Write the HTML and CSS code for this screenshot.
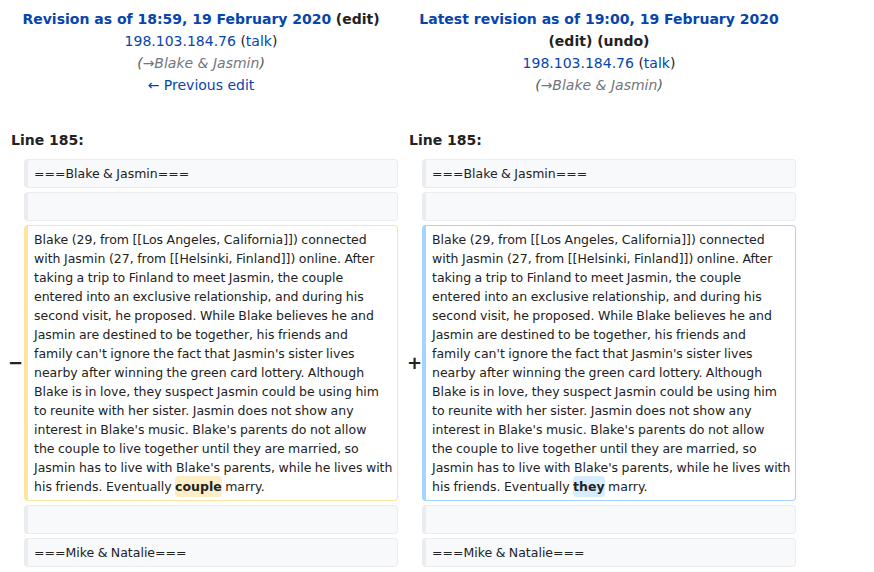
FILE: index.html
```html
<!DOCTYPE html>
<html lang="en">
<head>
<meta charset="utf-8">
<title>Difference between revisions</title>
<link rel="stylesheet" href="styles.css">
</head>
<body>
<div class="diff">
  <div class="title">
    <div><a class="strong" href="#">Revision as of 18:59, 19 February 2020</a> <span class="strong">(edit)</span></div>
    <div><a href="#">198.103.184.76</a> (<a href="#">talk</a>)</div>
    <div class="comment">(<span class="auto">→Blake &amp; Jasmin</span>)</div>
    <div><a href="#">← Previous edit</a></div>
  </div>
  <div class="title">
    <div><a class="strong" href="#">Latest revision as of 19:00, 19 February 2020</a> <span class="strong">(edit) (undo)</span></div>
    <div><a href="#">198.103.184.76</a> (<a href="#">talk</a>)</div>
    <div class="comment">(<span class="auto">→Blake &amp; Jasmin</span>)</div>
  </div>

  <div class="lineno">Line 185:</div>
  <div class="lineno">Line 185:</div>

  <div class="marker"></div>
  <div class="line context">===Blake &amp; Jasmin===</div>
  <div class="marker"></div>
  <div class="line context">===Blake &amp; Jasmin===</div>

  <div class="marker"></div>
  <div class="line context">&nbsp;</div>
  <div class="marker"></div>
  <div class="line context">&nbsp;</div>

  <div class="marker minus"><span>−</span></div>
  <div class="line deleted">Blake (29, from [[Los Angeles, California]]) connected<br>with Jasmin (27, from [[Helsinki, Finland]]) online. After<br>taking a trip to Finland to meet Jasmin, the couple<br>entered into an exclusive relationship, and during his<br>second visit, he proposed. While Blake believes he and<br>Jasmin are destined to be together, his friends and<br>family can't ignore the fact that Jasmin's sister lives<br>nearby after winning the green card lottery. Although<br>Blake is in love, they suspect Jasmin could be using him<br>to reunite with her sister. Jasmin does not show any<br>interest in Blake's music. Blake's parents do not allow<br>the couple to live together until they are married, so<br>Jasmin has to live with Blake's parents, while he lives with<br>his friends. Eventually <span class="change">couple</span> marry.</div>
  <div class="marker plus"><span>+</span></div>
  <div class="line added">Blake (29, from [[Los Angeles, California]]) connected<br>with Jasmin (27, from [[Helsinki, Finland]]) online. After<br>taking a trip to Finland to meet Jasmin, the couple<br>entered into an exclusive relationship, and during his<br>second visit, he proposed. While Blake believes he and<br>Jasmin are destined to be together, his friends and<br>family can't ignore the fact that Jasmin's sister lives<br>nearby after winning the green card lottery. Although<br>Blake is in love, they suspect Jasmin could be using him<br>to reunite with her sister. Jasmin does not show any<br>interest in Blake's music. Blake's parents do not allow<br>the couple to live together until they are married, so<br>Jasmin has to live with Blake's parents, while he lives with<br>his friends. Eventually <span class="change">they</span> marry.</div>

  <div class="marker"></div>
  <div class="line context">&nbsp;</div>
  <div class="marker"></div>
  <div class="line context">&nbsp;</div>

  <div class="marker"></div>
  <div class="line context">===Mike &amp; Natalie===</div>
  <div class="marker"></div>
  <div class="line context">===Mike &amp; Natalie===</div>
</div>
</body>
</html>
```

FILE: styles.css
```css
html, body {
  margin: 0;
  padding: 0;
  background: #ffffff;
}

body {
  font-family: "DejaVu Sans", sans-serif;
  font-size: 14px;
  color: #222222;
}

a {
  color: #0645ad;
  text-decoration: none;
}

.diff {
  display: grid;
  grid-template-columns: 16px 374px 16px 374px;
  gap: 4px;
  padding: 4px;
}

.title {
  grid-column: span 2;
  text-align: center;
  line-height: 22px;
  padding: 3.6px 7px 24px;
}

.strong {
  font-weight: bold;
}

.comment {
  font-style: italic;
  color: #54595d;
}

.comment .auto {
  color: #72777d;
}

.lineno {
  grid-column: span 2;
  font-weight: bold;
  line-height: 22.4px;
  padding: 5.6px 7px 3.6px;
}

.marker {
  display: flex;
  align-items: center;
  justify-content: flex-end;
  font-size: 18px;
  font-weight: bold;
  line-height: 1.2;
}

.marker.minus span {
  margin-right: -3px;
}

.marker.plus span {
  margin-right: -4px;
}

.line {
  font-size: 12.5px;
  line-height: 19px;
  padding: 4px 6px;
  border-style: solid;
  border-width: 1px 1px 1px 4px;
  border-radius: 4px;
  white-space: nowrap;
  word-spacing: -0.5px;
  color: #222222;
}

.context {
  background: #f8f9fa;
  border-color: #eaecf0;
}

.deleted {
  border-color: #ffe49c;
}

.added {
  border-color: #a3d3ff;
}

.change {
  font-weight: bold;
  border-radius: 4px;
  padding: 3px 0;
}

.deleted .change {
  background: #feeec8;
}

.added .change {
  background: #d8ecff;
}
```
